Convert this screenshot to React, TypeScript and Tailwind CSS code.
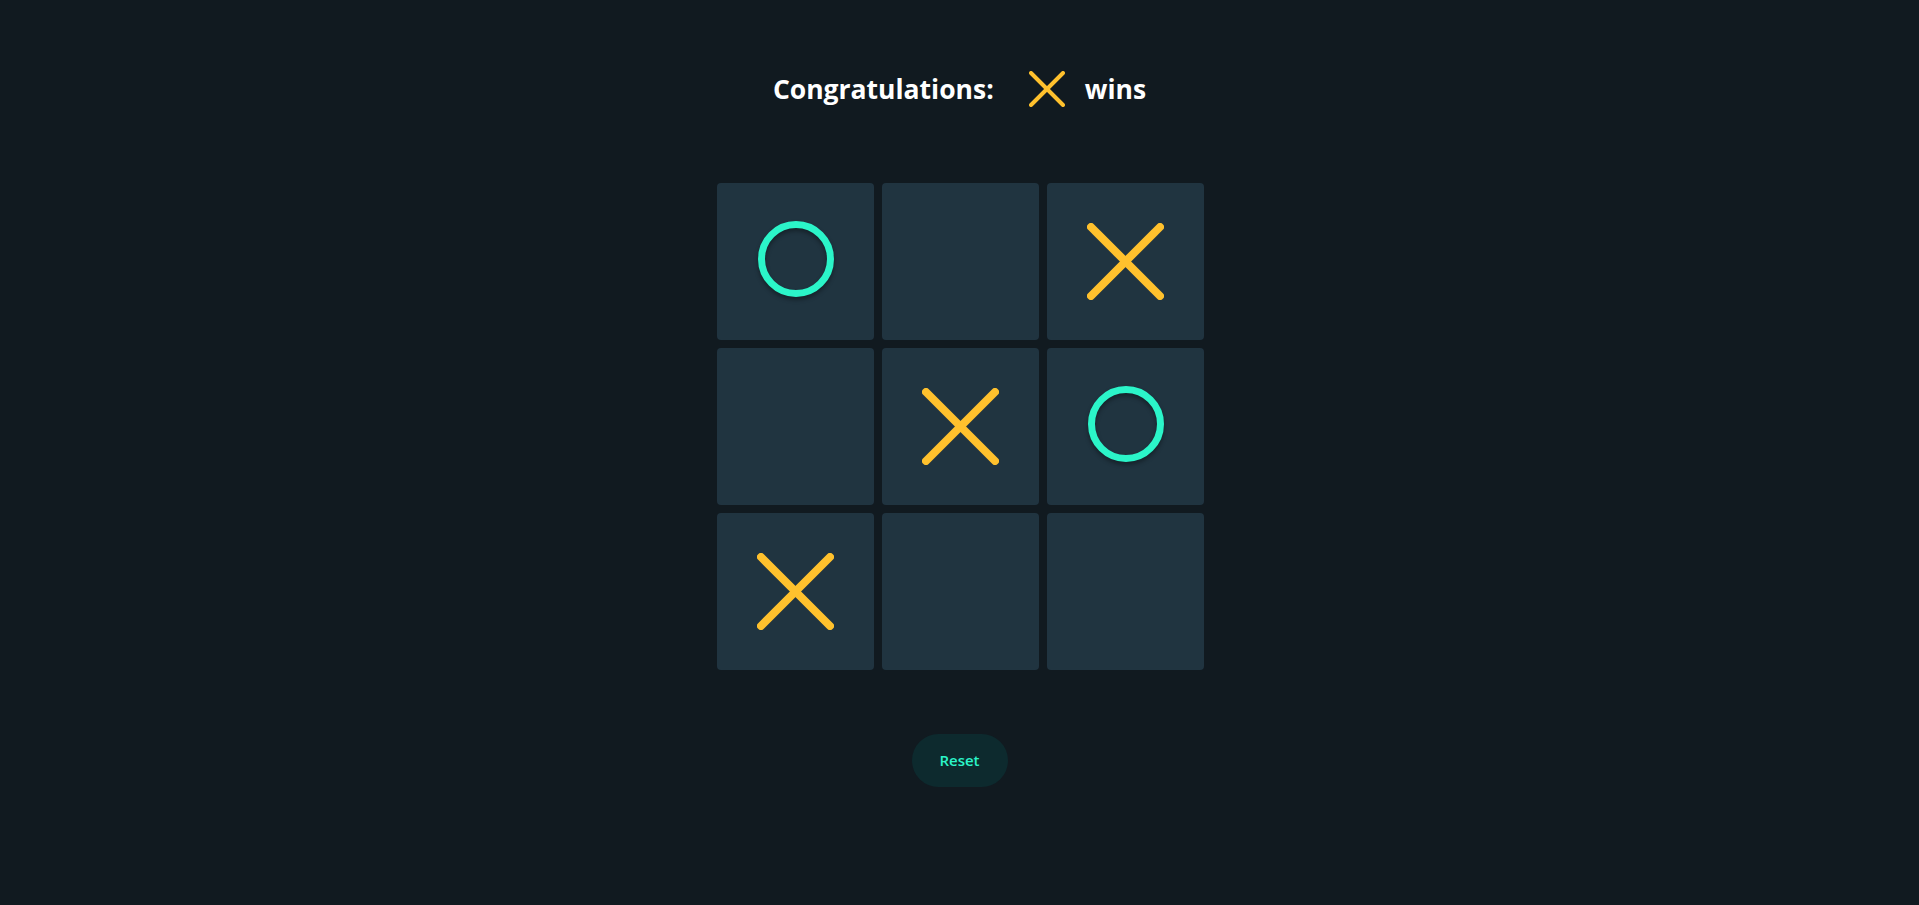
import React from "react";

type Mark = "X" | "O" | null;

const XMark = ({ size, stroke }: { size: number; stroke: number }) => (
  <svg width={size} height={size} viewBox={`0 0 ${size} ${size}`} fill="none">
    <line x1={stroke / 2} y1={stroke / 2} x2={size - stroke / 2} y2={size - stroke / 2} stroke="#ffc12d" strokeWidth={stroke} strokeLinecap="round" />
    <line x1={size - stroke / 2} y1={stroke / 2} x2={stroke / 2} y2={size - stroke / 2} stroke="#ffc12d" strokeWidth={stroke} strokeLinecap="round" />
  </svg>
);

const OMark = () => (
  <svg width={76} height={76} viewBox="0 0 76 76" fill="none" className="mb-[6px] drop-shadow-[0_3px_2px_rgba(0,0,0,0.35)]">
    <circle cx={38} cy={38} r={34.5} stroke="#2bf5c9" strokeWidth={7} />
  </svg>
);

const board: Mark[] = ["O", null, "X", null, "X", "O", "X", null, null];

export default function App() {
  return (
    <div
      className="min-h-[905px] w-full bg-[#111a20] flex flex-col items-center pt-[71px]"
      style={{ fontFamily: '"Open Sans", "Noto Sans", sans-serif' }}
    >
      <div className="flex items-center h-[36px]">
        <span className="text-white font-bold text-[26.5px] leading-none">Congratulations:</span>
        <span className="ml-[35px] mr-[20px] flex">
          <XMark size={36} stroke={4} />
        </span>
        <span className="text-white font-bold text-[26.5px] leading-none">wins</span>
      </div>

      <div className="mt-[76px] ml-[2px] grid grid-cols-[157px_157px_157px] grid-rows-[157px_157px_157px] gap-[8px]">
        {board.map((m, i) => (
          <div key={i} className="bg-[#203440] rounded-[4px] flex items-center justify-center">
            {m === "X" && <XMark size={77} stroke={8} />}
            {m === "O" && <OMark />}
          </div>
        ))}
      </div>

      <button className="mt-[64px] w-[96px] h-[53px] rounded-full bg-[#0d2a2e] text-[#2bf5c9] text-[15px] font-semibold">
        Reset
      </button>
    </div>
  );
}
